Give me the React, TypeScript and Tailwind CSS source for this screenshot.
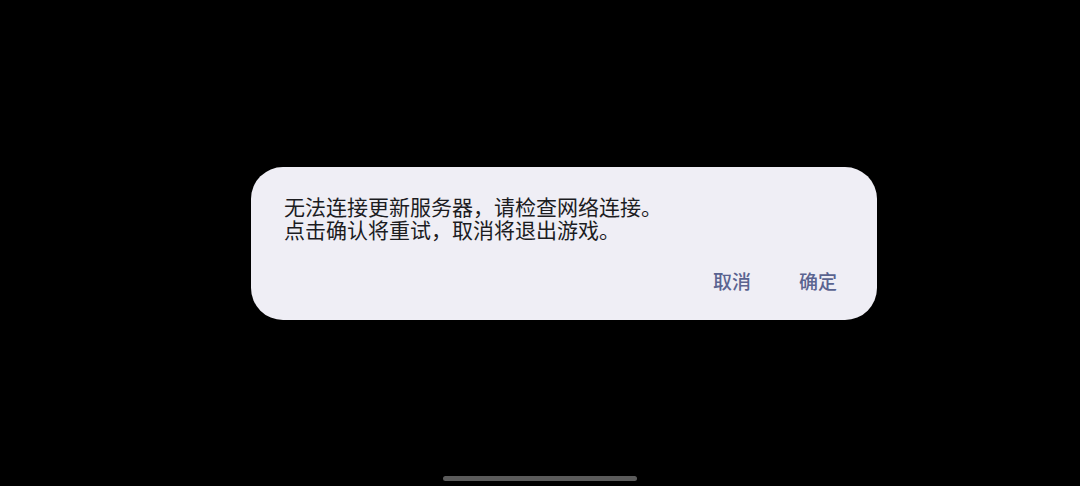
export default function App() {
  return (
    <main className="relative flex h-[486px] w-full items-center justify-center bg-black font-['Noto_Sans_CJK_SC','Noto_Sans',sans-serif]">
      <section className="ml-[48px] w-[626px] rounded-[32px] bg-[#efeef5] pt-[28px] pb-[27px] pl-[33px] pr-[40px]">
        <p className="text-[21px] leading-[23px] text-[#1c1c1f]">
          无法连接更新服务器，请检查网络连接。
          <br />
          点击确认将重试，取消将退出游戏。
        </p>
        <div className="mt-[28px] flex justify-end gap-[48px]">
          <button className="text-[19px] leading-[24px] font-medium text-[#5a6390]">取消</button>
          <button className="text-[19px] leading-[24px] font-medium text-[#5a6390]">确定</button>
        </div>
      </section>
      {/* home indicator */}
      <div className="absolute bottom-[5px] left-[443px] h-[5px] w-[194px] rounded-full bg-[#5b5b5b]" />
    </main>
  );
}
